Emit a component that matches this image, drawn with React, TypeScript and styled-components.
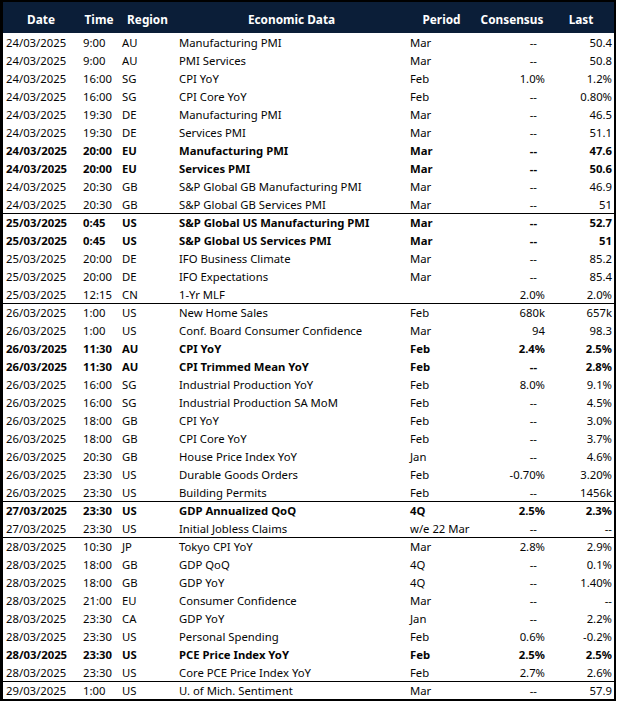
import React from "react";
import styled, { createGlobalStyle } from "styled-components";

const GlobalStyle = createGlobalStyle`
  html, body { margin: 0; padding: 0; background: #ffffff; }
  body { font-family: "Noto Sans", "Liberation Sans", sans-serif; }
`;

const COLS = "76px 40px 57px 231px 69px 72px 66px";

const Table = styled.div`
  width: 616px;
  box-sizing: border-box;
  border: 2px solid #000;
  border-left-width: 3px;
  background: #fff;
  font-family: "Noto Sans", "Liberation Sans", sans-serif;
`;

const HeaderRow = styled.div`
  display: grid;
  grid-template-columns: ${COLS};
  height: 31px;
  box-sizing: border-box;
  padding-top: 3px;
  align-items: center;
  background: #0b1e38;
  color: #fff;
  font-weight: 700;
  font-size: 11.8px;
`;

const HeadCell = styled.div`
  text-align: center;
  white-space: nowrap;
`;

const Row = styled.div<{ $bold?: boolean; $sep?: boolean }>`
  display: grid;
  grid-template-columns: ${COLS};
  height: 18px;
  box-sizing: border-box;
  align-items: center;
  font-size: 11.3px;
  color: #050505;
  font-weight: ${(p) => (p.$bold ? 700 : 400)};
  border-top: ${(p) => (p.$sep ? "1px solid #000" : "none")};
  line-height: 17px;
`;

const Cell = styled.div<{ $align?: "left" | "right"; $pl?: number; $pr?: number }>`
  text-align: ${(p) => p.$align ?? "left"};
  padding-left: ${(p) => p.$pl ?? 0}px;
  padding-right: ${(p) => p.$pr ?? 0}px;
  white-space: nowrap;
`;

const Dash = styled.span`
  display: inline-block;
  margin-right: 8px;
`;

type R = [string, string, string, string, string, string, string, boolean?, boolean?];

const rows: R[] = [
  ["24/03/2025", "9:00", "AU", "Manufacturing PMI", "Mar", "--", "50.4"],
  ["24/03/2025", "9:00", "AU", "PMI Services", "Mar", "--", "50.8"],
  ["24/03/2025", "16:00", "SG", "CPI YoY", "Feb", "1.0%", "1.2%"],
  ["24/03/2025", "16:00", "SG", "CPI Core YoY", "Feb", "--", "0.80%"],
  ["24/03/2025", "19:30", "DE", "Manufacturing PMI", "Mar", "--", "46.5"],
  ["24/03/2025", "19:30", "DE", "Services PMI", "Mar", "--", "51.1"],
  ["24/03/2025", "20:00", "EU", "Manufacturing PMI", "Mar", "--", "47.6", true],
  ["24/03/2025", "20:00", "EU", "Services PMI", "Mar", "--", "50.6", true],
  ["24/03/2025", "20:30", "GB", "S&P Global GB Manufacturing PMI", "Mar", "--", "46.9"],
  ["24/03/2025", "20:30", "GB", "S&P Global GB Services PMI", "Mar", "--", "51"],
  ["25/03/2025", "0:45", "US", "S&P Global US Manufacturing PMI", "Mar", "--", "52.7", true, true],
  ["25/03/2025", "0:45", "US", "S&P Global US Services PMI", "Mar", "--", "51", true],
  ["25/03/2025", "20:00", "DE", "IFO Business Climate", "Mar", "--", "85.2"],
  ["25/03/2025", "20:00", "DE", "IFO Expectations", "Mar", "--", "85.4"],
  ["25/03/2025", "12:15", "CN", "1-Yr MLF", "", "2.0%", "2.0%"],
  ["26/03/2025", "1:00", "US", "New Home Sales", "Feb", "680k", "657k", false, true],
  ["26/03/2025", "1:00", "US", "Conf. Board Consumer Confidence", "Mar", "94", "98.3"],
  ["26/03/2025", "11:30", "AU", "CPI YoY", "Feb", "2.4%", "2.5%", true],
  ["26/03/2025", "11:30", "AU", "CPI Trimmed Mean YoY", "Feb", "--", "2.8%", true],
  ["26/03/2025", "16:00", "SG", "Industrial Production YoY", "Feb", "8.0%", "9.1%"],
  ["26/03/2025", "16:00", "SG", "Industrial Production SA MoM", "Feb", "--", "4.5%"],
  ["26/03/2025", "18:00", "GB", "CPI YoY", "Feb", "--", "3.0%"],
  ["26/03/2025", "18:00", "GB", "CPI Core YoY", "Feb", "--", "3.7%"],
  ["26/03/2025", "20:30", "GB", "House Price Index YoY", "Jan", "--", "4.6%"],
  ["26/03/2025", "23:30", "US", "Durable Goods Orders", "Feb", "-0.70%", "3.20%"],
  ["26/03/2025", "23:30", "US", "Building Permits", "Feb", "--", "1456k"],
  ["27/03/2025", "23:30", "US", "GDP Annualized QoQ", "4Q", "2.5%", "2.3%", true, true],
  ["27/03/2025", "23:30", "US", "Initial Jobless Claims", "w/e 22 Mar", "--", "--"],
  ["28/03/2025", "10:30", "JP", "Tokyo CPI YoY", "Mar", "2.8%", "2.9%", false, true],
  ["28/03/2025", "18:00", "GB", "GDP QoQ", "4Q", "--", "0.1%"],
  ["28/03/2025", "18:00", "GB", "GDP YoY", "4Q", "--", "1.40%"],
  ["28/03/2025", "21:00", "EU", "Consumer Confidence", "Mar", "--", "--"],
  ["28/03/2025", "23:30", "CA", "GDP YoY", "Jan", "--", "2.2%"],
  ["28/03/2025", "23:30", "US", "Personal Spending", "Feb", "0.6%", "-0.2%"],
  ["28/03/2025", "23:30", "US", "PCE Price Index YoY", "Feb", "2.5%", "2.5%", true],
  ["28/03/2025", "23:30", "US", "Core PCE Price Index YoY", "Feb", "2.7%", "2.6%"],
  ["29/03/2025", "1:00", "US", "U. of Mich. Sentiment", "Mar", "--", "57.9", false, true],
];

export default function App() {
  return (
    <>
      <GlobalStyle />
      <Table>
        <HeaderRow>
          <HeadCell>Date</HeadCell>
          <HeadCell>Time</HeadCell>
          <HeadCell>Region</HeadCell>
          <HeadCell>Economic Data</HeadCell>
          <HeadCell>Period</HeadCell>
          <HeadCell>Consensus</HeadCell>
          <HeadCell>Last</HeadCell>
        </HeaderRow>
        {rows.map((r, i) => (
          <Row key={i} $bold={!!r[7]} $sep={!!r[8]}>
            <Cell $pl={3}>{r[0]}</Cell>
            <Cell $pl={4}>{r[1]}</Cell>
            <Cell $pl={3}>{r[2]}</Cell>
            <Cell $pl={3}>{r[3]}</Cell>
            <Cell $pl={3}>{r[4]}</Cell>
            <Cell $align="right" $pr={3}>
              {r[5] === "--" ? <Dash>--</Dash> : r[5]}
            </Cell>
            <Cell $align="right" $pr={2}>{r[6]}</Cell>
          </Row>
        ))}
      </Table>
    </>
  );
}
